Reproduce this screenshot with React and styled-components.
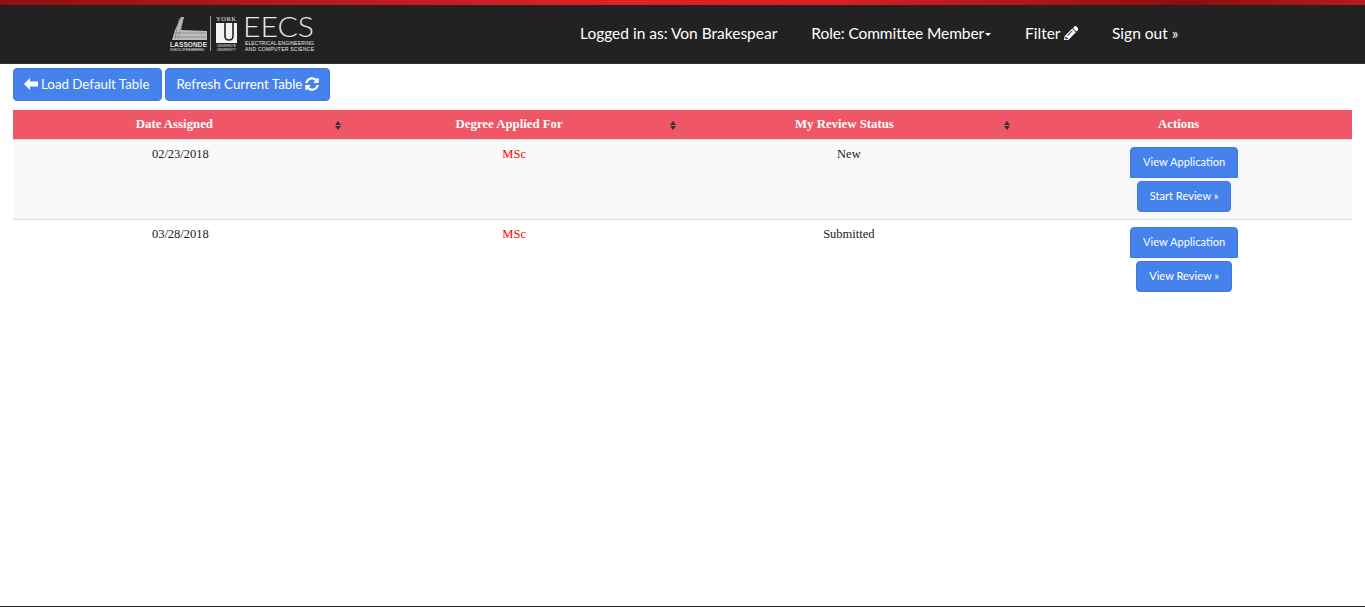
import React from "react";
import styled, { createGlobalStyle } from "styled-components";
import { FaPencilAlt, FaSyncAlt } from "react-icons/fa";

const GlobalStyle = createGlobalStyle`
  html, body {
    margin: 0;
    padding: 0;
    background: #fff;
  }
  body {
    font-family: "Lato", "Liberation Sans", sans-serif;
  }
  * {
    box-sizing: border-box;
  }
`;

const Page = styled.div`
  height: 607px;
  display: flex;
  flex-direction: column;
  border-bottom: 1px solid #222;
`;

const Header = styled.header`
  height: 64px;
  flex: none;
  background: #222;
  border-bottom: 1px solid #2e2e2e;
  display: flex;
  flex-direction: column;
`;

const TopStripe = styled.div`
  height: 5px;
  flex: none;
  background: linear-gradient(to right, #8f1013 0%, #dc2327 45%, #d92226 60%, #8c0e10 87%, #b51b1e 100%);
`;

const NavBar = styled.nav`
  flex: 1;
  display: flex;
  align-items: center;
  padding: 0 0 2px 169px;
`;

const Logo = styled.svg`
  width: 146px;
  height: 38px;
  flex: none;
  overflow: visible;
`;

const LogoText = styled.text`
  fill: #e8e8e8;
  font-family: ${(p) => p.$family || '"Liberation Sans", sans-serif'};
  font-size: ${(p) => p.$size}px;
  font-weight: ${(p) => p.$weight || 400};
`;

const NavLinks = styled.div`
  display: flex;
  align-items: center;
  margin-left: 265px;
`;

const NavLink = styled.a`
  color: #fff;
  font-size: 15.5px;
  letter-spacing: ${(p) => (p.$tight ? "-0.1px" : "0")};
  display: inline-flex;
  align-items: center;
  gap: 3px;
  margin-right: 34px;
  white-space: nowrap;
`;

const Caret = styled.span`
  width: 0;
  height: 0;
  margin-left: -2px;
  margin-top: 3px;
  border-top: 3px solid #fff;
  border-left: 3.5px solid transparent;
  border-right: 3.5px solid transparent;
`;

const Toolbar = styled.div`
  display: flex;
  gap: 3px;
  padding: 4px 13px 0;
`;

const Button = styled.button`
  background: #4582ec;
  border: 1px solid #3f78d8;
  border-radius: ${(p) => (p.$flatBottom ? "4px 4px 0 0" : "4px")};
  color: #fff;
  font-family: "Lato", "Liberation Sans", sans-serif;
  font-size: ${(p) => (p.$small ? 11.1 : 13.3)}px;
  height: ${(p) => (p.$small ? 31 : 33)}px;
  padding: 0 ${(p) => (p.$small ? 12 : 10)}px 2px;
  display: inline-flex;
  align-items: center;
  gap: 3px;
  white-space: nowrap;
`;

const LoadButton = styled(Button)`
  padding-right: 12px;
`;

const TableWrap = styled.div`
  padding: 9px 13px 0;
`;

const Table = styled.table`
  width: 100%;
  border-collapse: collapse;
  table-layout: fixed;
  font-family: "Liberation Serif", "DejaVu Serif", serif;
  font-size: 12.5px;
`;

const HeadCell = styled.th`
  position: relative;
  background: #ef5666;
  color: #fff;
  height: 29px;
  padding: 0 ${(p) => p.$shift || 0}px 0 0;
  font-size: 12.8px;
  font-weight: 700;
  text-align: center;
  border-bottom: 1px solid #ddd;
`;

const SortMark = styled.svg`
  position: absolute;
  right: 7px;
  top: 11px;
  width: 6px;
  height: 9px;
`;

const Row = styled.tr`
  background: ${(p) => (p.$striped ? "#f9f9f9" : "#fff")};
  height: 80px;
  border-bottom: ${(p) => (p.$striped ? "1px solid #ddd" : "none")};
`;

const Cell = styled.td`
  vertical-align: top;
  text-align: center;
  padding: 7px ${(p) => p.$shift || 0}px 0 0;
  color: ${(p) => (p.$red ? "#f00" : "#222")};
`;

const ActionStack = styled.div`
  display: flex;
  flex-direction: column;
  align-items: center;
  gap: 3px;
  padding-right: 1px;
`;

const SortIcon = () => (
  <SortMark viewBox="0 0 6 9">
    <path d="M3 0 6 4H0Z M0 5H6L3 9Z" fill="#333" />
  </SortMark>
);

const ArrowLeft = () => (
  <svg width="14" height="12" viewBox="0 0 14 12">
    <path d="M0 6 6 0V3.5H14V8.5H6V12Z" fill="#fff" />
  </svg>
);

const LassondeLogo = () => (
  <Logo viewBox="0 0 146 38">
    <path d="M12 3H15L12 16L38 17V26H3L6 16Z" fill="#bdbdbd" />
    <path d="M10 4 6 25M14 4 9 25M5 19H37M5 23H37" stroke="#777" strokeWidth="0.6" />
    <LogoText x="1" y="33" $size="6.5" $weight="700" textLength="37">LASSONDE</LogoText>
    <LogoText x="1" y="37" $size="3" textLength="34">SCHOOL OF ENGINEERING</LogoText>
    <rect x="41" y="2" width="1" height="35" fill="#999" />
    <LogoText x="47" y="7" $size="6.5" textLength="20" $family='"Liberation Serif", serif'>YORK</LogoText>
    <path d="M47 9H68V29H47Z" fill="#f2f2f2" />
    <path d="M56 9V22Q56 26 60 26Q64 26 64 22V9" fill="none" stroke="#222" strokeWidth="1.6" />
    <LogoText x="48" y="33" $size="3" textLength="19">UNIVERSITÉ</LogoText>
    <LogoText x="48" y="37" $size="3" textLength="19">UNIVERSITY</LogoText>
    <LogoText x="74" y="23" $size="26.5" $weight="300" textLength="71" lengthAdjust="spacingAndGlyphs" $family='"Lato", sans-serif'>EECS</LogoText>
    <LogoText x="76" y="31" $size="5" textLength="69">ELECTRICAL ENGINEERING</LogoText>
    <LogoText x="76" y="37" $size="5" textLength="69">AND COMPUTER SCIENCE</LogoText>
  </Logo>
);

const rows = [
  { date: "02/23/2018", status: "New", next: "Start Review »", striped: true },
  { date: "03/28/2018", status: "Submitted", next: "View Review »" },
];

export default function App() {
  return (
    <Page>
      <GlobalStyle />
      <Header>
        <TopStripe />
        <NavBar>
          <LassondeLogo />
          <NavLinks>
            <NavLink>Logged in as: Von Brakespear</NavLink>
            <NavLink $tight>Role: Committee Member<Caret /></NavLink>
            <NavLink>Filter <FaPencilAlt size={14.5} /></NavLink>
            <NavLink>Sign out »</NavLink>
          </NavLinks>
        </NavBar>
      </Header>
      <Toolbar>
        <LoadButton><ArrowLeft />Load Default Table</LoadButton>
        <Button>Refresh Current Table <FaSyncAlt size={14} /></Button>
      </Toolbar>
      <TableWrap>
        <Table>
          <thead>
            <tr>
              <HeadCell $shift={12}>Date Assigned<SortIcon /></HeadCell>
              <HeadCell $shift={12}>Degree Applied For<SortIcon /></HeadCell>
              <HeadCell $shift={11}>My Review Status<SortIcon /></HeadCell>
              <HeadCell $shift={12}>Actions</HeadCell>
            </tr>
          </thead>
          <tbody>
            {rows.map((r) => (
              <Row key={r.date} $striped={r.striped}>
                <Cell>{r.date}</Cell>
                <Cell $red $shift={2}>MSc</Cell>
                <Cell $shift={2}>{r.status}</Cell>
                <Cell>
                  <ActionStack>
                    <Button $small $flatBottom>View Application</Button>
                    <Button $small>{r.next}</Button>
                  </ActionStack>
                </Cell>
              </Row>
            ))}
          </tbody>
        </Table>
      </TableWrap>
    </Page>
  );
}
